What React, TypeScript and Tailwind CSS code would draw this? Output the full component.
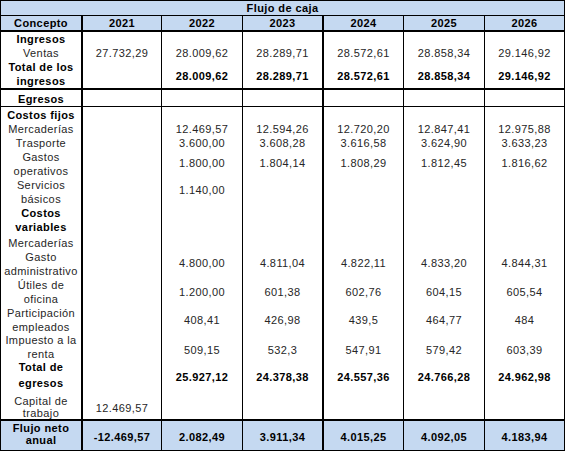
import React from "react";

type Sub = {
  label: string[];
  vals: string[];
  h: string;
  lpt: string;
  lh: string;
  vpt: string;
  bold?: boolean;
  lbold?: boolean;
};

const COLS = "grid grid-cols-[82px_79px_81px_81px_80px_81px_80px]";

function cellBorder(i: number) {
  if (i === 0 || i === 3) return "border-r-2 border-black";
  return "border-r border-black";
}

function SubRow({ r, bg }: { r: Sub; bg?: string }) {
  const cells = [r.label, ...r.vals.map((v) => [v])];
  return (
    <div className={`${COLS} ${r.h}`}>
      {cells.map((c, i) => (
        <div
          key={i}
          className={`${cellBorder(i)} ${bg ?? ""} flex flex-col items-center ${
            i === 0 ? `${r.lpt} ${r.lh} ${r.lbold ? "font-bold text-black" : "text-[#262626]"}` : `${r.vpt} leading-[14px] ${r.bold ? "font-bold text-black" : "text-[#262626]"}`
          } text-center whitespace-nowrap`}
        >
          {c.map((t, j) => (
            <span key={j}>{t}</span>
          ))}
        </div>
      ))}
    </div>
  );
}

const E = ["", "", "", "", "", ""];

const ingresos: Sub[] = [
  { label: ["Ingresos"], vals: E, h: "h-[14px]", lpt: "pt-0", lh: "leading-[14px]", vpt: "pt-0", lbold: true },
  {
    label: ["Ventas"],
    vals: ["27.732,29", "28.009,62", "28.289,71", "28.572,61", "28.858,34", "29.146,92"],
    h: "h-[14px]",
    lpt: "pt-0",
    lh: "leading-[14px]",
    vpt: "pt-0",
  },
  {
    label: ["Total de los", "ingresos"],
    vals: ["", "28.009,62", "28.289,71", "28.572,61", "28.858,34", "29.146,92"],
    h: "h-[28px]",
    lpt: "pt-0",
    lh: "leading-[14px]",
    vpt: "pt-[9px]",
    bold: true,
    lbold: true,
  },
];

const egresos: Sub[] = [
  { label: ["Costos fijos"], vals: E, h: "h-[15px]", lpt: "pt-[1px]", lh: "leading-[14px]", vpt: "pt-0", lbold: true },
  {
    label: ["Mercaderías"],
    vals: ["", "12.469,57", "12.594,26", "12.720,20", "12.847,41", "12.975,88"],
    h: "h-[14px]",
    lpt: "pt-0",
    lh: "leading-[14px]",
    vpt: "pt-0",
  },
  {
    label: ["Trasporte"],
    vals: ["", "3.600,00", "3.608,28", "3.616,58", "3.624,90", "3.633,23"],
    h: "h-[14px]",
    lpt: "pt-0",
    lh: "leading-[14px]",
    vpt: "pt-0",
  },
  {
    label: ["Gastos", "operativos"],
    vals: ["", "1.800,00", "1.804,14", "1.808,29", "1.812,45", "1.816,62"],
    h: "h-[28px]",
    lpt: "pt-0",
    lh: "leading-[14px]",
    vpt: "pt-[6px]",
  },
  {
    label: ["Servicios", "básicos"],
    vals: ["", "1.140,00", "", "", "", ""],
    h: "h-[28px]",
    lpt: "pt-0",
    lh: "leading-[14px]",
    vpt: "pt-[5px]",
  },
  { label: ["Costos", "variables"], vals: E, h: "h-[29px]", lpt: "pt-0", lh: "leading-[14px]", vpt: "pt-0", lbold: true },
  { label: ["Mercaderías"], vals: E, h: "h-[15px]", lpt: "pt-[1px]", lh: "leading-[14px]", vpt: "pt-0" },
  {
    label: ["Gasto", "administrativo"],
    vals: ["", "4.800,00", "4.811,04", "4.822,11", "4.833,20", "4.844,31"],
    h: "h-[28px]",
    lpt: "pt-0",
    lh: "leading-[14px]",
    vpt: "pt-[6px]",
  },
  {
    label: ["Útiles de", "oficina"],
    vals: ["", "1.200,00", "601,38", "602,76", "604,15", "605,54"],
    h: "h-[28px]",
    lpt: "pt-0",
    lh: "leading-[14px]",
    vpt: "pt-[7px]",
  },
  {
    label: ["Participación", "empleados"],
    vals: ["", "408,41", "426,98", "439,5", "464,77", "484"],
    h: "h-[27px]",
    lpt: "pt-0",
    lh: "leading-[14px]",
    vpt: "pt-[7px]",
  },
  {
    label: ["Impuesto a la", "renta"],
    vals: ["", "509,15", "532,3", "547,91", "579,42", "603,39"],
    h: "h-[26px]",
    lpt: "pt-0",
    lh: "leading-[14px]",
    vpt: "pt-[10px]",
  },
  {
    label: ["Total de", "egresos"],
    vals: ["", "25.927,12", "24.378,38", "24.557,36", "24.766,28", "24.962,98"],
    h: "h-[32px]",
    lpt: "pt-0",
    lh: "leading-[16px]",
    vpt: "pt-[11px]",
    bold: true,
    lbold: true,
  },
  {
    label: ["Capital de", "trabajo"],
    vals: ["12.469,57", "", "", "", "", ""],
    h: "h-[28px]",
    lpt: "pt-[4px]",
    lh: "leading-[12px]",
    vpt: "pt-[10px]",
  },
];

const flujo: Sub = {
  label: ["Flujo neto", "anual"],
  vals: ["-12.469,57", "2.082,49", "3.911,34", "4.015,25", "4.092,05", "4.183,94"],
  h: "h-[29px]",
  lpt: "pt-[1px]",
  lh: "leading-[12px]",
  vpt: "pt-[9px]",
  bold: true,
  lbold: true,
};

const years = ["Concepto", "2021", "2022", "2023", "2024", "2025", "2026"];

export default function App() {
  return (
    <div className="w-[567px] h-[452px] bg-white [font-family:'Liberation_Sans',Arial,sans-serif] text-[11px] tracking-[0.4px]">
      <div className="w-[565px] border-l border-black">
        <div className="h-[16px] border-t border-b border-r border-black bg-[#c5d9f1] flex items-center justify-center font-bold text-black leading-[14px]">
          Flujo de caja
        </div>
        <div className={`${COLS} h-[16px] border-b-2 border-black`}>
          {years.map((y, i) => (
            <div
              key={i}
              className={`${cellBorder(i)} bg-[#c5d9f1] flex items-center justify-center font-bold text-black leading-[14px]`}
            >
              {y}
            </div>
          ))}
        </div>
        <div className="border-b-2 border-black">
          {ingresos.map((r, i) => (
            <SubRow key={i} r={r} />
          ))}
        </div>
        <div className={`${COLS} h-[17px] border-b border-black`}>
          {years.map((_, i) => (
            <div
              key={i}
              className={`${cellBorder(i)} flex items-center justify-center font-bold text-black leading-[14px] pt-[2px]`}
            >
              {i === 0 ? "Egresos" : ""}
            </div>
          ))}
        </div>
        <div className="border-b-2 border-black">
          {egresos.map((r, i) => (
            <SubRow key={i} r={r} />
          ))}
        </div>
        <div className="border-b border-black">
          <SubRow r={flujo} bg="bg-[#c5d9f1]" />
        </div>
      </div>
    </div>
  );
}
